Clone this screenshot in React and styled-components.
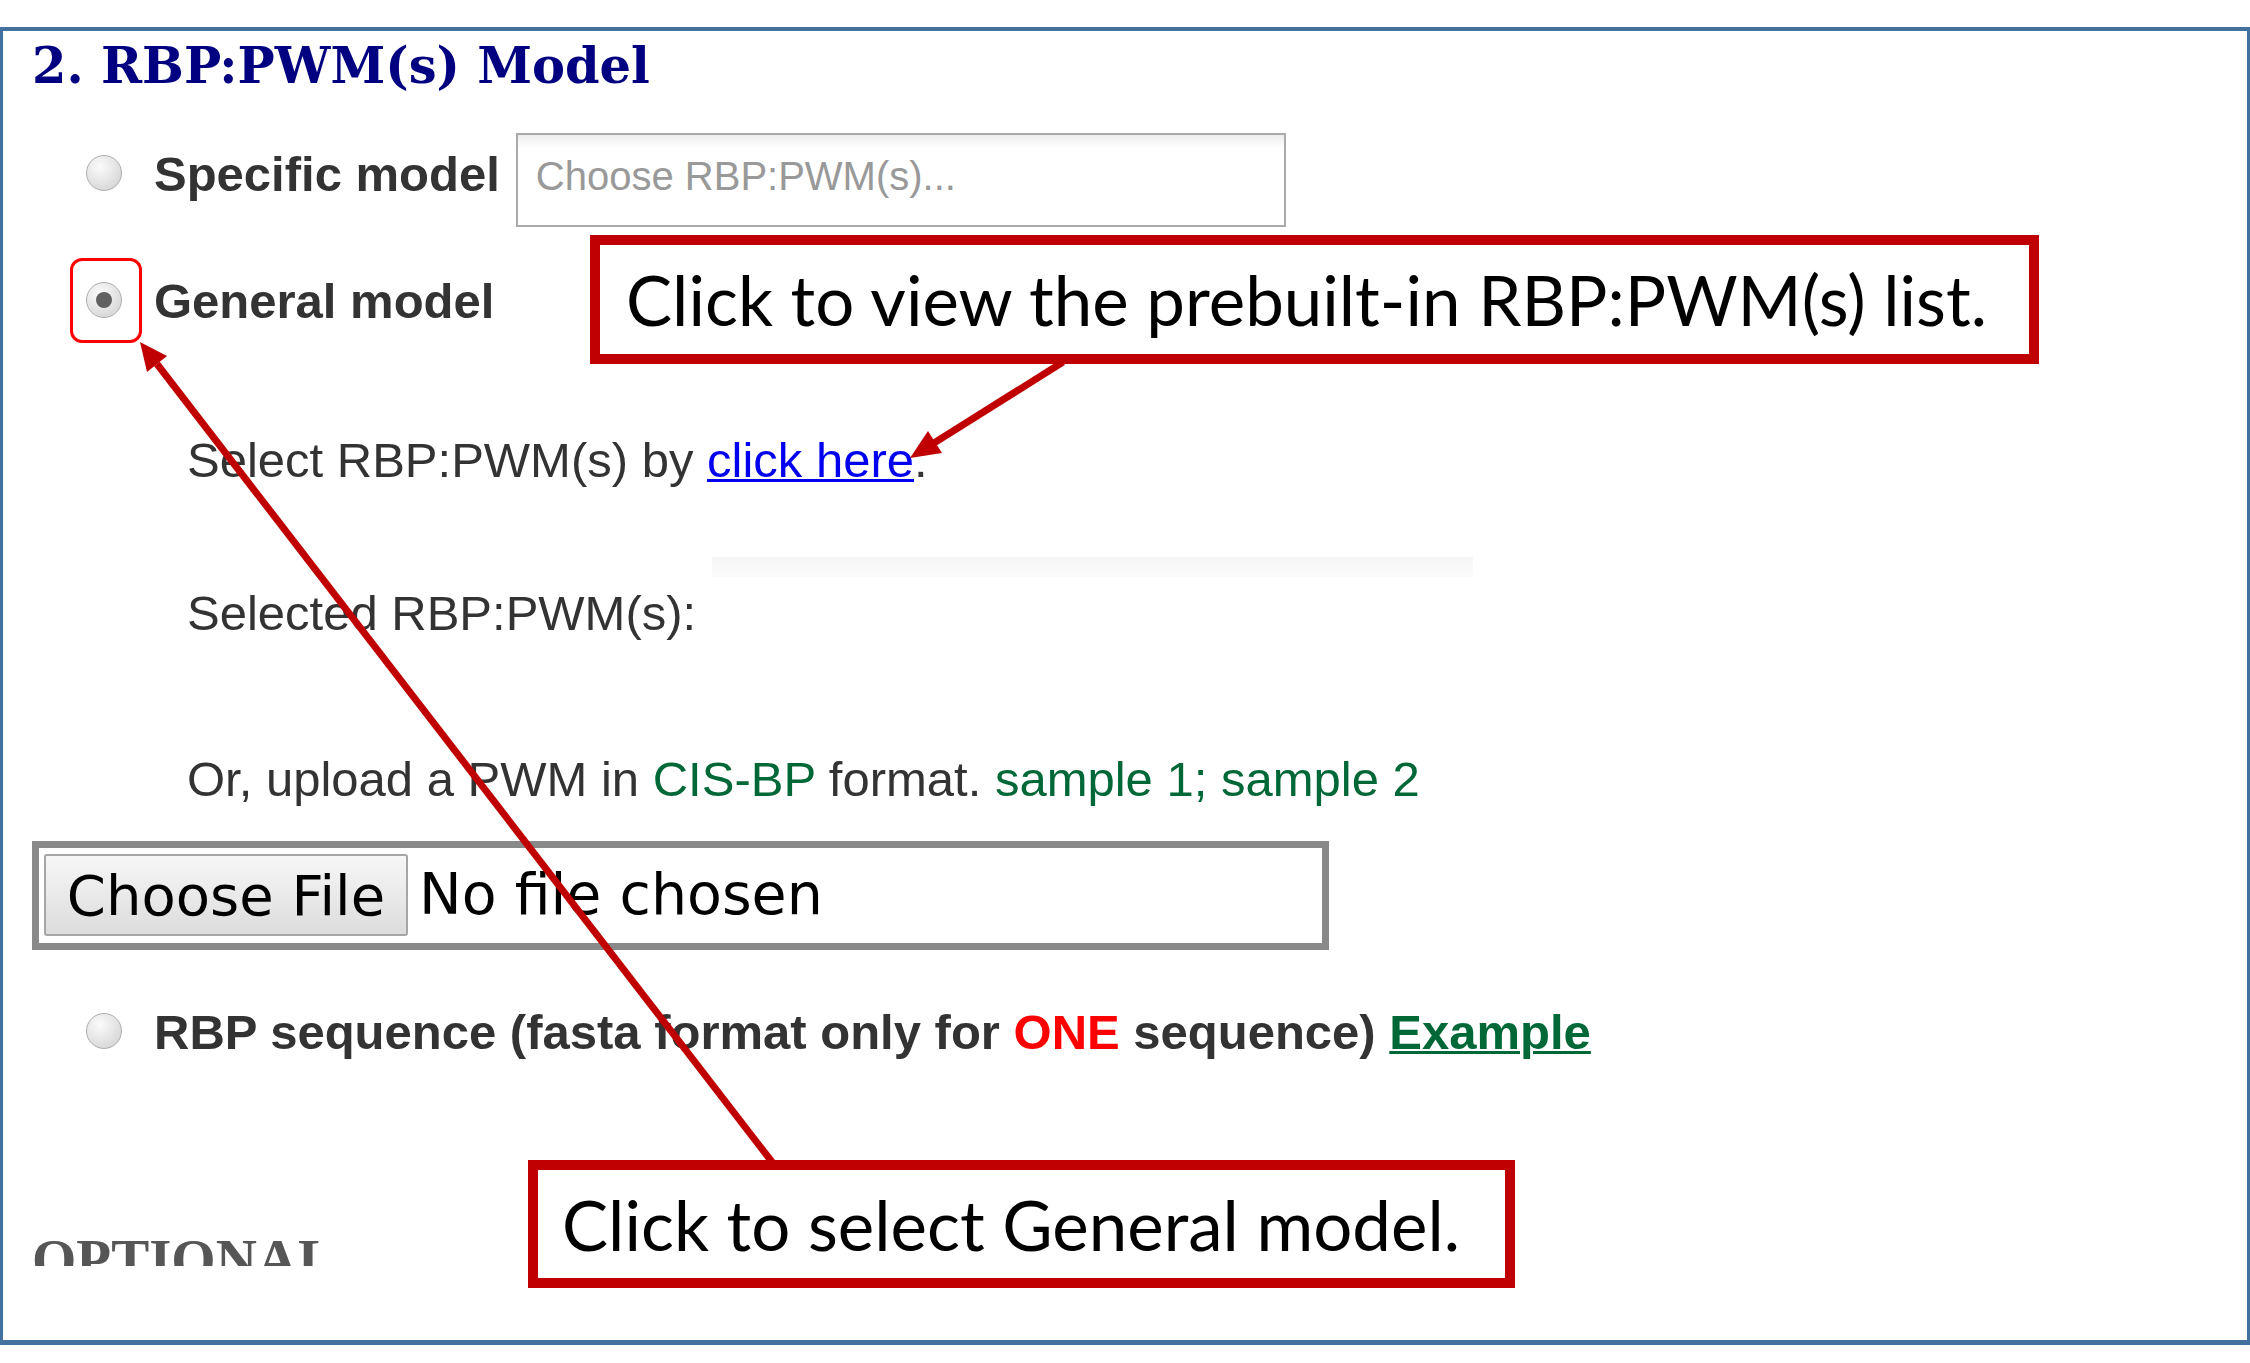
import React from 'react';
import styled, { createGlobalStyle, css } from 'styled-components';

const Global = createGlobalStyle`
  html, body { margin: 0; padding: 0; background: #ffffff; }
  body { font-family: "Liberation Sans", Arial, sans-serif; }
`;

const Page = styled.div`
  position: relative;
  width: 2250px;
  height: 1363px;
  padding-top: 27px;
  box-sizing: border-box;
  overflow: hidden;
  background: #ffffff;
`;

const Frame = styled.div`
  box-sizing: border-box;
  height: 1318px;
  border-style: solid;
  border-color: #41719c;
  border-width: 4px 3px 5px 3px;
`;

const Content = styled.div`
  box-sizing: border-box;
  height: 1235px;
  overflow: hidden;
  padding: 5px 0 0 29px;
`;

const Title = styled.h2`
  margin: 0;
  font-family: "DejaVu Serif", "Liberation Serif", serif;
  font-weight: bold;
  font-size: 49.5px;
  line-height: 60px;
  color: #000080;
  white-space: nowrap;
`;

const OptionRow = styled.div`
  display: flex;
  align-items: flex-start;
  padding-left: 54px;
  margin-top: ${(p) => p.$gap}px;
`;

const Radio = styled.span`
  flex: none;
  width: 36px;
  height: 36px;
  margin-top: ${(p) => p.$offset}px;
  box-sizing: border-box;
  border-radius: 50%;
  border: 1px solid #adadad;
  background: radial-gradient(circle at 38% 32%, #fbfbfb 0%, #e9e9e9 40%, #cdcdcd 100%);
  display: flex;
  align-items: center;
  justify-content: center;
  ${(p) =>
    p.$checked &&
    css`
      &::after {
        content: '';
        width: 16px;
        height: 16px;
        border-radius: 50%;
        background: #606060;
      }
    `}
`;

const OptionLabel = styled.span`
  margin-left: 32px;
  font-weight: bold;
  font-size: 49px;
  line-height: 82px;
  color: #333333;
  white-space: nowrap;
`;

const ChosenBox = styled.div`
  flex: none;
  margin-left: 16px;
  width: 770px;
  height: 94px;
  box-sizing: border-box;
  border: 2px solid #aaaaaa;
  background: linear-gradient(#eeeeee 1%, #ffffff 15%);
  display: flex;
  align-items: center;
  padding: 0 0 8px 18px;
  font-size: 40px;
  color: #999999;
  white-space: nowrap;
`;

const SubLine = styled.div`
  display: flex;
  align-items: flex-start;
  padding-left: 155px;
  margin-top: ${(p) => p.$gap}px;
  font-size: 49px;
  line-height: 82px;
  color: #333333;
  white-space: nowrap;
`;

const BlueLink = styled.a`
  color: #0000ee;
  text-decoration: underline;
  text-decoration-thickness: 3px;
  cursor: pointer;
`;

const Green = styled.span`
  color: #006837;
`;

const GreenLink = styled.a`
  color: #006837;
  text-decoration: underline;
  text-decoration-thickness: 3px;
  cursor: pointer;
`;

const Alert = styled.span`
  color: #ff0000;
`;

const FaintStrip = styled.span`
  flex: none;
  margin-left: 16px;
  margin-top: -15px;
  width: 761px;
  height: 20px;
  background: linear-gradient(#f6f6f6, #fbfbfb);
`;

const FileBox = styled.div`
  margin-top: 21px;
  width: 1297px;
  height: 109px;
  box-sizing: border-box;
  border: 7px solid #898989;
  padding: 6px 0 0 5px;
  display: flex;
  align-items: flex-start;
  background: #ffffff;
  font-family: "DejaVu Sans", "Liberation Sans", sans-serif;
  font-size: 56px;
  color: #000000;
`;

const FileButton = styled.button`
  flex: none;
  width: 364px;
  height: 82px;
  box-sizing: border-box;
  border: 2px solid #a6a6a6;
  border-radius: 3px;
  background: linear-gradient(#f7f7f7, #dcdcdc);
  font: inherit;
  color: #000000;
  padding: 0;
  display: flex;
  align-items: center;
  justify-content: center;
  white-space: nowrap;
`;

const FileName = styled.span`
  margin-left: 11px;
  font-size: 57px;
  line-height: 80px;
  white-space: nowrap;
`;

const SectionHead = styled.div`
  margin-top: 156px;
  font-family: "Liberation Serif", serif;
  font-weight: bold;
  font-size: 57px;
  line-height: 62px;
  color: #565656;
`;

const Callout = styled.div`
  position: absolute;
  left: ${(p) => p.$x}px;
  top: ${(p) => p.$y}px;
  width: ${(p) => p.$w}px;
  height: ${(p) => p.$h}px;
  box-sizing: border-box;
  border: 10px solid #c00000;
  background: #ffffff;
  display: flex;
  align-items: center;
  padding-left: ${(p) => p.$pad}px;
  font-family: Lato, "Open Sans", sans-serif;
  font-size: 69px;
  color: #000000;
  white-space: nowrap;
`;

const Highlight = styled.div`
  position: absolute;
  left: 70px;
  top: 258px;
  width: 72px;
  height: 85px;
  box-sizing: border-box;
  border: 3px solid #ff0000;
  border-radius: 12px;
`;

const ArrowLayer = styled.svg`
  position: absolute;
  left: 0;
  top: 0;
  pointer-events: none;
`;

export default function App() {
  return (
    <>
      <Global />
      <Page>
        <Frame>
          <Content>
            <Title>2. RBP:PWM(s) Model</Title>

            <OptionRow $gap={37}>
              <Radio $offset={22} />
              <OptionLabel>Specific model</OptionLabel>
              <ChosenBox>Choose RBP:PWM(s)...</ChosenBox>
            </OptionRow>

            <OptionRow $gap={33}>
              <Radio $offset={22} $checked />
              <OptionLabel>General model</OptionLabel>
            </OptionRow>

            <SubLine $gap={77}>
              <span>
                Select RBP:PWM(s) by <BlueLink>click here</BlueLink>.
              </span>
            </SubLine>

            <SubLine $gap={71}>
              <span>Selected RBP:PWM(s):</span>
              <FaintStrip />
            </SubLine>

            <SubLine $gap={84}>
              <span>
                Or, upload a PWM in <Green>CIS-BP</Green> format. <Green>sample 1; sample 2</Green>
              </span>
            </SubLine>

            <FileBox>
              <FileButton type="button">Choose File</FileButton>
              <FileName>No file chosen</FileName>
            </FileBox>

            <OptionRow $gap={41}>
              <Radio $offset={22} />
              <OptionLabel>
                RBP sequence (fasta format only for <Alert>ONE</Alert> sequence){' '}
                <GreenLink>Example</GreenLink>
              </OptionLabel>
            </OptionRow>

            <SectionHead>OPTIONAL</SectionHead>
          </Content>
        </Frame>

        <Callout $x={590} $y={235} $w={1449} $h={129} $pad={26}>
          Click to view the prebuilt-in RBP:PWM(s) list.
        </Callout>
        <Callout $x={528} $y={1160} $w={987} $h={128} $pad={24}>
          Click to select General model.
        </Callout>
        <Highlight />

        <ArrowLayer width="2250" height="1363" viewBox="0 0 2250 1363">
          <line x1="1063" y1="362" x2="934" y2="443" stroke="#c00000" strokeWidth="7" />
          <polygon points="910,458 942,453 928,431" fill="#c00000" />
          <line x1="772" y1="1162" x2="157" y2="364" stroke="#c00000" strokeWidth="7" />
          <polygon points="140,342 167,356 147,372" fill="#c00000" />
        </ArrowLayer>
      </Page>
    </>
  );
}
